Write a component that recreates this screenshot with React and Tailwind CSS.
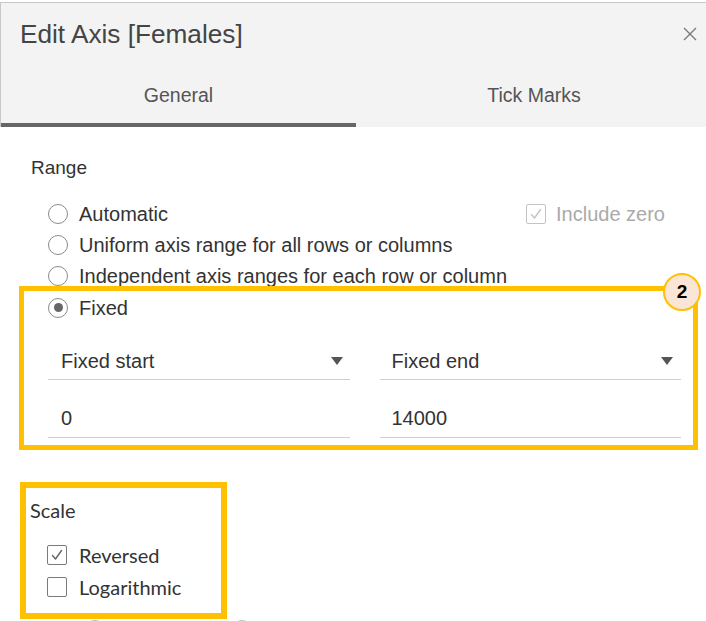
import React from 'react';

const Radio = ({ checked }) => (
  <span className="flex h-[20px] w-[20px] shrink-0 items-center justify-center rounded-full border-[1.5px] border-[#8a8a8a] bg-white">
    {checked && <span className="h-[9px] w-[9px] rounded-full bg-[#666]" />}
  </span>
);

const Checkbox = ({ checked, disabled }) => (
  <span
    className={`flex h-[20px] w-[20px] shrink-0 items-center justify-center rounded-[2px] border-[1.5px] bg-white ${
      disabled ? 'border-[#c4c4c4]' : 'border-[#7a7a7a]'
    }`}
  >
    {checked && (
      <svg width="14" height="14" viewBox="0 0 14 14" fill="none">
        <path
          d="M2.5 7.5 L5.5 11 L11.5 2.5"
          stroke={disabled ? '#c4c4c4' : '#666'}
          strokeWidth="1.4"
          strokeLinecap="round"
          strokeLinejoin="round"
        />
      </svg>
    )}
  </span>
);

const Caret = () => (
  <svg width="12" height="8" viewBox="0 0 12 8">
    <path d="M0 0 H12 L6 8 Z" fill="#555" />
  </svg>
);

const OptionRow = ({ label, checked, children }) => (
  <div className="flex h-[31px] items-center pl-[48px] pr-[41px]">
    <Radio checked={checked} />
    <span className="ml-[11px] text-[20px] leading-[24px] text-[#333]">{label}</span>
    {children}
  </div>
);

const App = () => {
  return (
    <div
      className="relative h-[621px] w-[706px] overflow-hidden bg-white pt-[2px]"
      style={{ fontFamily: '"Liberation Sans", Arial, sans-serif' }}
    >
      {/* header */}
      <div className="border-l border-t border-[#c8c8c8] bg-[#f3f3f3]">
        <div className="flex items-start justify-between pl-[19px] pr-[9px] pt-[16px]">
          <h1 className="text-[26.2px] font-normal leading-[30px] text-[#444]">Edit Axis [Females]</h1>
          <svg width="14" height="14" viewBox="0 0 14 14" className="mt-[8px]">
            <path d="M1 1 L13 13 M13 1 L1 13" stroke="#777" strokeWidth="1.3" />
          </svg>
        </div>
        <div className="flex">
          <div className="h-[78px] w-[355px] border-b-4 border-[#666] pt-[34px] text-center text-[19.5px] leading-[24px] text-[#555]">
            General
          </div>
          <div className="h-[78px] flex-1 pl-[6px] pt-[34px] text-center text-[19.5px] leading-[24px] text-[#555]">
            Tick Marks
          </div>
        </div>
      </div>

      {/* body */}
      <div className="pt-[29px]">
        <div className="pl-[31px] text-[19px] leading-[24px] text-[#333]">Range</div>

        <div className="mt-[18px]">
          <OptionRow label="Automatic">
            <div className="ml-auto flex items-center">
              <Checkbox checked disabled />
              <span className="ml-[10px] text-[20px] leading-[24px] text-[#aaa]">Include zero</span>
            </div>
          </OptionRow>
          <OptionRow label="Uniform axis range for all rows or columns" />
          <OptionRow label="Independent axis ranges for each row or column" />
        </div>

        {/* annotation 2 */}
        <div className="relative -mt-[5px] ml-[19px] w-[679px] border-[5px] border-[#FFC000] pb-[7px] pl-[24px] pr-[12px]">
          <div className="flex h-[33px] items-center">
            <Radio checked />
            <span className="ml-[11px] text-[20px] leading-[24px] text-[#333]">Fixed</span>
          </div>

          <div className="grid grid-cols-2 gap-x-[30px]">
            <div className="flex items-center justify-between border-b border-[#cfcfcf] pb-[6px] pl-[13px] pr-[7px] pt-[25px]">
              <span className="text-[20px] leading-[24px] text-[#333]">Fixed start</span>
              <Caret />
            </div>
            <div className="flex items-center justify-between border-b border-[#cfcfcf] pb-[6px] pl-[12px] pr-[8px] pt-[25px]">
              <span className="text-[20px] leading-[24px] text-[#333]">Fixed end</span>
              <Caret />
            </div>
            <div className="border-b border-[#cfcfcf] pb-[7px] pl-[13px] pt-[26px] text-[20px] leading-[24px] text-[#333]">
              0
            </div>
            <div className="border-b border-[#cfcfcf] pb-[7px] pl-[12px] pt-[26px] text-[20px] leading-[24px] text-[#333]">
              14000
            </div>
          </div>

          <div className="absolute left-[639px] top-[-18px] flex h-[38px] w-[38px] items-center justify-center rounded-full border-2 border-[#FFC000] bg-[#FBE5D6] text-[19px] font-bold text-black">
            2
          </div>
        </div>

        {/* annotation scale */}
        <div
          className="ml-[20px] mt-[32px] w-[207px] border-[6px] border-[#FFC000] pb-[10px] pl-[4px] pt-[10px]"
          style={{ fontFamily: 'Lato, "Liberation Sans", sans-serif' }}
        >
          <div className="text-[20px] leading-[24px] text-[#333]">Scale</div>
          <div className="mt-[17px] pl-[17px]">
            <div className="flex h-[32px] items-center">
              <Checkbox checked />
              <span className="ml-[12px] text-[20px] leading-[24px] text-[#333]">Reversed</span>
            </div>
            <div className="flex h-[32px] items-center">
              <Checkbox />
              <span className="ml-[12px] text-[20px] leading-[24px] text-[#333]">Logarithmic</span>
            </div>
          </div>
        </div>

        <div className="mt-[1px] flex gap-[127px] pl-[85px]">
          <span className="h-[20px] w-[20px] rounded-full border-[1.5px] border-[#bbb]" />
          <span className="h-[20px] w-[20px] rounded-full border-[1.5px] border-[#bbb]" />
        </div>
      </div>
    </div>
  );
};

export default App;
